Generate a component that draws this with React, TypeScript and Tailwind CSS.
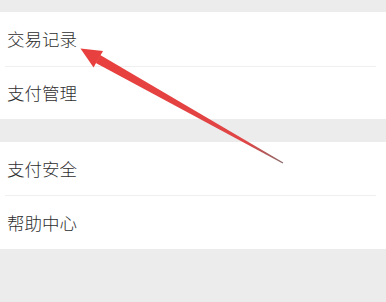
export default function App() {
  const row = 'flex items-center pl-[7px] text-[17.5px] leading-none text-[#2e2e2e] font-light';
  const sep = 'h-px bg-[#efefef] ml-[5px] mr-[10px]';
  return (
    <div className="relative w-[386px] h-[302px] overflow-hidden bg-[#ececec] font-['Noto_Sans_CJK_SC',sans-serif]">
      <div className="h-[12px]" />
      <div className="bg-white">
        <div className={`${row} h-[54px]`}>交易记录</div>
        <div className={sep} />
        <div className={`${row} h-[52px]`}>支付管理</div>
      </div>
      <div className="h-[23px]" />
      <div className="bg-white">
        <div className={`${row} h-[53px]`}>支付安全</div>
        <div className={sep} />
        <div className={`${row} h-[53px]`}>帮助中心</div>
      </div>

      {/* annotation arrow */}
      <svg className="absolute inset-0" width="386" height="302" viewBox="0 0 386 302">
        <defs>
          <linearGradient id="shaft" x1="98" y1="59" x2="283" y2="163" gradientUnits="userSpaceOnUse">
            <stop offset="0" stopColor="#e8403e" />
            <stop offset="0.8" stopColor="#e04545" />
            <stop offset="1" stopColor="#8a6a6a" />
          </linearGradient>
        </defs>
        <polygon points="100.2,55 283.3,162.5 282.7,163.5 95.8,63" fill="url(#shaft)" />
        <polygon points="80.5,48.5 103,51 93.5,67.5" fill="#e8403e" />
      </svg>
    </div>
  );
}
